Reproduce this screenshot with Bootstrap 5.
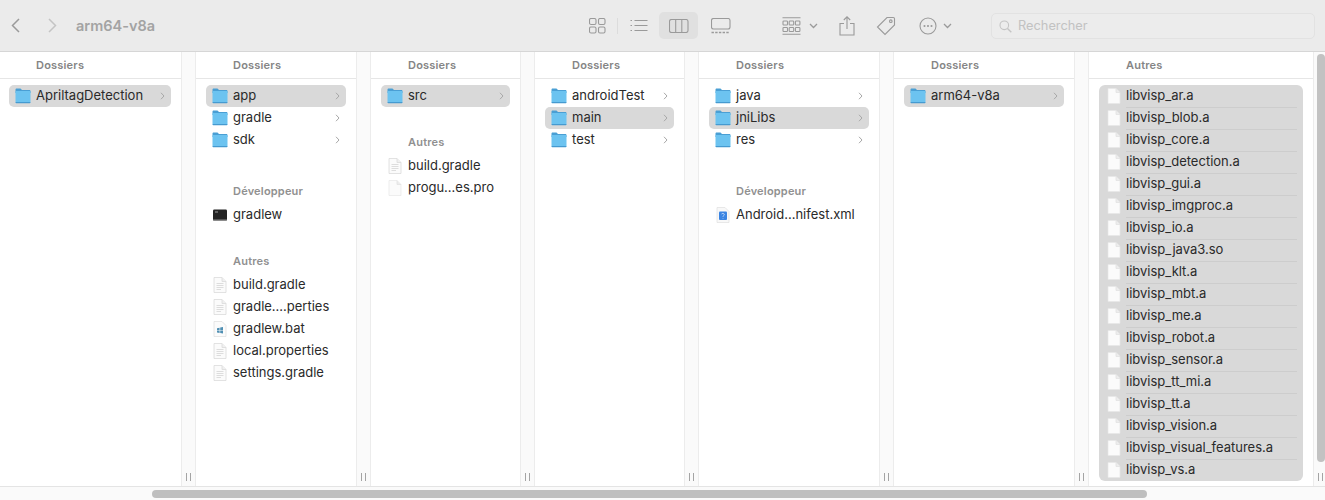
<!DOCTYPE html>
<html lang="fr">
<head>
<meta charset="utf-8">
<title>arm64-v8a</title>
<link rel="stylesheet" href="https://cdn.jsdelivr.net/npm/bootstrap@5.3.0/dist/css/bootstrap.min.css">
<style>
html,body{height:500px;overflow:hidden;background:#fff}
body{font-family:Inter,"Liberation Sans",sans-serif;font-size:13px;color:#2a2a2a}
.win{width:1325px;height:500px}
.tb{height:52px;background:#ebebeb;border-bottom:1px solid #d6d6d6;flex:none}
.tb svg{display:block;flex:none;fill:none;stroke:#9a9a9a;stroke-width:1.1}
.tb svg.dim{stroke:#c4c4c4}
.ttl{font-size:14.5px;font-weight:600;color:#a3a3a3;width:80px;margin-left:19px;white-space:nowrap}
.viewsel{width:39px;height:27px;background:#e0e0e0;border-radius:5px}
.tsep{width:1px;height:16px;background:#dcdcdc}
.srch{width:324px;height:26px;margin-left:39px;margin-top:1px;border:1px solid #e2e2e2;border-radius:5px;background:#ececec;color:#c2c2c2;font-size:12.8px;padding-left:7px;gap:6px}
.cols{height:434px;flex:none}
.colm{flex:none;height:100%}
.w1{width:181px}.w2{width:160px}.w3{width:149px}.w5{width:180px}.w6{width:180px}.w7{width:224px}
.gut{flex:none;width:15px;background:#fafafa;border-left:1px solid #ececec;border-right:1px solid #ececec;padding-bottom:5px}
.gut-last{width:12px;border-right:0;padding-bottom:5px}
.grip{width:5px;height:8px;border-left:1px solid #a4a4a4;border-right:1px solid #a4a4a4}
.vthumb{width:8px;height:408px;background:#c2c2c2;border-radius:4px;margin:2px 0 0 3px}
.hd{height:27px;border-bottom:1px solid #e6e6e6;font-size:11px;font-weight:600;color:#858585;padding-left:37px;margin-bottom:6px;letter-spacing:.2px;line-height:26px}
.w1 .hd{padding-left:36px}
.sec{font-size:11px;font-weight:600;color:#909090;padding-left:37px;height:18px;line-height:18px;margin-top:26px;margin-bottom:4px;letter-spacing:.2px}
.sec.far{margin-top:31px}
.rw{height:22px;margin:0 10px;padding:0 6px 0 5px;border-radius:5px;gap:4px;white-space:nowrap}
.w1 .rw{margin-left:9px}
.rw.on{background:#d9d9d9}
.rw svg{flex:none}
.nm{flex:1}
.cv{flex:none;width:5px;height:8px;stroke:#a8a8a8;fill:none;stroke-width:1}
.ico{width:18px;height:18px}
.blk{margin:0 10px;background:#d9d9d9;border-radius:6px;padding:0 6px 0 0;width:204px}
.blk .rw2{height:22px;padding-left:6px;gap:3px;position:relative;white-space:nowrap}
.blk .rw2 + .rw2::before{content:"";position:absolute;left:27px;right:0;top:0;border-top:1px solid #cdcdcd}
.hbar{height:14px;flex:none;background:#fafafa;border-top:1px solid #e4e4e4;padding-left:152px;padding-top:3px}
.hthumb{width:995px;height:8px;border-radius:4px;background:#bfbfbf}
</style>
</head>
<body>
<svg width="0" height="0" class="d-block position-absolute">
<defs>
<symbol id="fld" viewBox="0 0 18 18">
<path d="M1.500 4V2.600C1.500 2 2 1.500 2.600 1.500H6.500L8 3H15.400C16 3 16.500 3.500 16.500 4.100V6H1.500Z" fill="#4a9fd4"/>
<path d="M1.500 5.200C1.500 4.500 2 4 2.700 4H15.300C16 4 16.500 4.500 16.500 5.200V14.800C16.500 15.500 16 16 15.300 16H2.700C2 16 1.500 15.500 1.500 14.800Z" fill="#6cc3f0"/>
<path d="M1.500 15H16.500V15.200C16.500 15.700 16 16.200 15.400 16.200H2.600C2 16.200 1.500 15.700 1.500 15.200Z" fill="#459ad0"/>
</symbol>
<symbol id="doc" viewBox="0 0 18 18">
<path d="M3 1.500H11L15 5.500V16.500H3Z" fill="#fbfbfb" stroke="#dadada" stroke-width=".8"/>
<path d="M11 1.500V5.500H15" fill="#f0f0f0" stroke="#dadada" stroke-width=".8"/>
<path d="M5.500 7.500H12.500M5.500 9.500H12.500M5.500 11.500H12.500M5.500 13.500H10" stroke="#d6d6d6" stroke-width=".8"/>
</symbol>
<symbol id="blank" viewBox="0 0 18 18">
<path d="M3 1.500H11L15 5.500V16.500H3Z" fill="#fbfbfb" stroke="#e6e6e6" stroke-width=".7"/>
<path d="M11 1.500V5.500H15" fill="#ededed" stroke="#dfdfdf" stroke-width=".7"/>
</symbol>
<symbol id="term" viewBox="0 0 18 18">
<rect x="2" y="3.500" width="14" height="11" rx="1.200" fill="#232323"/>
<rect x="2" y="13.500" width="14" height="1.200" fill="#8a8a8a"/>
<path d="M4 6H7" stroke="#bdbdbd" stroke-width=".8"/>
</symbol>
<symbol id="bat" viewBox="0 0 18 18">
<path d="M3 1.500H11L15 5.500V16.500H3Z" fill="#fbfbfb" stroke="#dcdcdc" stroke-width=".7"/>
<path d="M6 8.200L8.600 7.700V10H6ZM9.200 7.600L12 7V10H9.200ZM6 10.600H8.600V12.900L6 12.400ZM9.200 10.600H12V13.600L9.200 13Z" fill="#4f8fb3"/>
</symbol>
<symbol id="xml" viewBox="0 0 18 18">
<path d="M3 1.500H11L15 5.500V16.500H3Z" fill="#f8f8f8" stroke="#e0e0e0" stroke-width=".7"/>
<rect x="5" y="5.500" width="8" height="8.500" rx="1" fill="#3a84e2"/>
<path d="M7.500 8C7.800 7.200 10.300 7.200 10.300 8.500C10.300 9.500 9 9.500 9 10.800M9 12V12.600" stroke="#cfe2fb" stroke-width=".8" fill="none"/>
</symbol>
<symbol id="chev" viewBox="0 0 5 8"><path d="M1 .8L4 4L1 7.200"/></symbol>
</defs>
</svg>

<div class="win d-flex flex-column">
  <div class="tb d-flex align-items-center">
    <svg style="margin-left:11px;stroke-width:1.500" width="9" height="15" viewBox="0 0 9 15"><path d="M8 1L1.500 7.500L8 14"/></svg>
    <svg class="dim" style="margin-left:28px;stroke-width:1.500" width="9" height="15" viewBox="0 0 9 15"><path d="M1 1L7.500 7.500L1 14"/></svg>
    <div class="ttl">arm64-v8a</div>
    <svg style="margin-left:433px" width="17" height="16" viewBox="0 0 17 16"><rect x=".5" y=".5" width="6.500" height="6" rx="1.500"/><rect x="9.500" y=".5" width="6.500" height="6" rx="1.500"/><rect x=".5" y="9" width="6.500" height="6" rx="1.500"/><rect x="9.500" y="9" width="6.500" height="6" rx="1.500"/></svg>
    <div class="tsep" style="margin-left:11px"></div>
    <svg style="margin-left:12px" width="18" height="13" viewBox="0 0 18 13"><path d="M4.500 1.500H17.500M4.500 6.500H17.500M4.500 11.500H17.500M.5 1.500H2M.5 6.500H2M.5 11.500H2"/></svg>
    <div class="viewsel d-flex align-items-center justify-content-center" style="margin-left:11px">
      <svg width="20" height="14" viewBox="0 0 20 14"><rect x=".5" y=".5" width="18.500" height="13" rx="2"/><path d="M6.700 .5V13.500M12.800 .5V13.500"/></svg>
    </div>
    <svg style="margin-left:13px" width="20" height="16" viewBox="0 0 20 16"><rect x=".5" y=".5" width="18.500" height="10.500" rx="2"/><path d="M.5 14.500H19" stroke-dasharray="2.400 1.300" stroke-width="1.600"/></svg>
    <svg style="margin-left:51px" width="19" height="18" viewBox="0 0 19 18"><path d="M.5 .8H18.500M.5 17.300H18.500" /><rect x="1" y="4" width="4.500" height="4" rx=".8"/><rect x="7.200" y="4" width="4.500" height="4" rx=".8"/><rect x="13.400" y="4" width="4.500" height="4" rx=".8"/><rect x="1" y="10.500" width="4.500" height="4" rx=".8"/><rect x="7.200" y="10.500" width="4.500" height="4" rx=".8"/><rect x="13.400" y="10.500" width="4.500" height="4" rx=".8"/></svg>
    <svg style="margin-left:8px;stroke-width:1.300" width="9" height="6" viewBox="0 0 9 6"><path d="M1 1L4.500 4.500L8 1"/></svg>
    <svg style="margin-left:21px" width="16" height="20" viewBox="0 0 16 20"><path d="M5 7.500H1V19H15V7.500H11M8 13V1M4.800 4L8 .8L11.200 4"/></svg>
    <svg style="margin-left:21px" width="20" height="20" viewBox="0 0 20 20"><path d="M11 1.500H17.300C18 1.500 18.500 2 18.500 2.700V9L9 18.500L1.500 11Z"/><circle cx="14.800" cy="5.200" r="1.300"/></svg>
    <svg style="margin-left:23px" width="18" height="18" viewBox="0 0 18 18"><circle cx="9" cy="9" r="8"/><circle cx="5.500" cy="9" r=".5"/><circle cx="9" cy="9" r=".5"/><circle cx="12.500" cy="9" r=".5"/></svg>
    <svg style="margin-left:6px;stroke-width:1.300" width="9" height="6" viewBox="0 0 9 6"><path d="M1 1L4.500 4.500L8 1"/></svg>
    <div class="srch d-flex align-items-center">
      <svg class="dim" width="13" height="13" viewBox="0 0 13 13"><circle cx="5.300" cy="5.300" r="4.300"/><path d="M8.500 8.500L12.300 12.300" stroke-width="1.400"/></svg>
      <span>Rechercher</span>
    </div>
  </div>

  <div class="cols d-flex">
    <div class="colm w1">
      <div class="hd">Dossiers</div>
      <div class="rw on d-flex align-items-center"><svg class="ico"><use href="#fld"/></svg><span class="nm">ApriltagDetection</span><svg class="cv"><use href="#chev"/></svg></div>
    </div>
    <div class="gut d-flex justify-content-center align-items-end"><div class="grip"></div></div>

    <div class="colm w2">
      <div class="hd">Dossiers</div>
      <div class="rw on d-flex align-items-center"><svg class="ico"><use href="#fld"/></svg><span class="nm">app</span><svg class="cv"><use href="#chev"/></svg></div>
      <div class="rw d-flex align-items-center"><svg class="ico"><use href="#fld"/></svg><span class="nm">gradle</span><svg class="cv"><use href="#chev"/></svg></div>
      <div class="rw d-flex align-items-center"><svg class="ico"><use href="#fld"/></svg><span class="nm">sdk</span><svg class="cv"><use href="#chev"/></svg></div>
      <div class="sec far">Développeur</div>
      <div class="rw d-flex align-items-center"><svg class="ico"><use href="#term"/></svg><span class="nm">gradlew</span></div>
      <div class="sec">Autres</div>
      <div class="rw d-flex align-items-center"><svg class="ico"><use href="#doc"/></svg><span class="nm">build.gradle</span></div>
      <div class="rw d-flex align-items-center"><svg class="ico"><use href="#doc"/></svg><span class="nm">gradle....perties</span></div>
      <div class="rw d-flex align-items-center"><svg class="ico"><use href="#bat"/></svg><span class="nm">gradlew.bat</span></div>
      <div class="rw d-flex align-items-center"><svg class="ico"><use href="#doc"/></svg><span class="nm">local.properties</span></div>
      <div class="rw d-flex align-items-center"><svg class="ico"><use href="#doc"/></svg><span class="nm">settings.gradle</span></div>
    </div>
    <div class="gut d-flex justify-content-center align-items-end"><div class="grip"></div></div>

    <div class="colm w3">
      <div class="hd">Dossiers</div>
      <div class="rw on d-flex align-items-center"><svg class="ico"><use href="#fld"/></svg><span class="nm">src</span><svg class="cv"><use href="#chev"/></svg></div>
      <div class="sec">Autres</div>
      <div class="rw d-flex align-items-center"><svg class="ico"><use href="#doc"/></svg><span class="nm">build.gradle</span></div>
      <div class="rw d-flex align-items-center"><svg class="ico"><use href="#blank"/></svg><span class="nm">progu...es.pro</span></div>
    </div>
    <div class="gut d-flex justify-content-center align-items-end"><div class="grip"></div></div>

    <div class="colm w3">
      <div class="hd">Dossiers</div>
      <div class="rw d-flex align-items-center"><svg class="ico"><use href="#fld"/></svg><span class="nm">androidTest</span><svg class="cv"><use href="#chev"/></svg></div>
      <div class="rw on d-flex align-items-center"><svg class="ico"><use href="#fld"/></svg><span class="nm">main</span><svg class="cv"><use href="#chev"/></svg></div>
      <div class="rw d-flex align-items-center"><svg class="ico"><use href="#fld"/></svg><span class="nm">test</span><svg class="cv"><use href="#chev"/></svg></div>
    </div>
    <div class="gut d-flex justify-content-center align-items-end"><div class="grip"></div></div>

    <div class="colm w5">
      <div class="hd">Dossiers</div>
      <div class="rw d-flex align-items-center"><svg class="ico"><use href="#fld"/></svg><span class="nm">java</span><svg class="cv"><use href="#chev"/></svg></div>
      <div class="rw on d-flex align-items-center"><svg class="ico"><use href="#fld"/></svg><span class="nm">jniLibs</span><svg class="cv"><use href="#chev"/></svg></div>
      <div class="rw d-flex align-items-center"><svg class="ico"><use href="#fld"/></svg><span class="nm">res</span><svg class="cv"><use href="#chev"/></svg></div>
      <div class="sec far">Développeur</div>
      <div class="rw d-flex align-items-center"><svg class="ico"><use href="#xml"/></svg><span class="nm">Android...nifest.xml</span></div>
    </div>
    <div class="gut d-flex justify-content-center align-items-end"><div class="grip"></div></div>

    <div class="colm w6">
      <div class="hd">Dossiers</div>
      <div class="rw on d-flex align-items-center"><svg class="ico"><use href="#fld"/></svg><span class="nm">arm64-v8a</span><svg class="cv"><use href="#chev"/></svg></div>
    </div>
    <div class="gut d-flex justify-content-center align-items-end"><div class="grip"></div></div>

    <div class="colm w7">
      <div class="hd">Autres</div>
      <div class="blk">
        <div class="rw2 d-flex align-items-center"><svg class="ico"><use href="#blank"/></svg><span>libvisp_ar.a</span></div>
        <div class="rw2 d-flex align-items-center"><svg class="ico"><use href="#blank"/></svg><span>libvisp_blob.a</span></div>
        <div class="rw2 d-flex align-items-center"><svg class="ico"><use href="#blank"/></svg><span>libvisp_core.a</span></div>
        <div class="rw2 d-flex align-items-center"><svg class="ico"><use href="#blank"/></svg><span>libvisp_detection.a</span></div>
        <div class="rw2 d-flex align-items-center"><svg class="ico"><use href="#blank"/></svg><span>libvisp_gui.a</span></div>
        <div class="rw2 d-flex align-items-center"><svg class="ico"><use href="#blank"/></svg><span>libvisp_imgproc.a</span></div>
        <div class="rw2 d-flex align-items-center"><svg class="ico"><use href="#blank"/></svg><span>libvisp_io.a</span></div>
        <div class="rw2 d-flex align-items-center"><svg class="ico"><use href="#blank"/></svg><span>libvisp_java3.so</span></div>
        <div class="rw2 d-flex align-items-center"><svg class="ico"><use href="#blank"/></svg><span>libvisp_klt.a</span></div>
        <div class="rw2 d-flex align-items-center"><svg class="ico"><use href="#blank"/></svg><span>libvisp_mbt.a</span></div>
        <div class="rw2 d-flex align-items-center"><svg class="ico"><use href="#blank"/></svg><span>libvisp_me.a</span></div>
        <div class="rw2 d-flex align-items-center"><svg class="ico"><use href="#blank"/></svg><span>libvisp_robot.a</span></div>
        <div class="rw2 d-flex align-items-center"><svg class="ico"><use href="#blank"/></svg><span>libvisp_sensor.a</span></div>
        <div class="rw2 d-flex align-items-center"><svg class="ico"><use href="#blank"/></svg><span>libvisp_tt_mi.a</span></div>
        <div class="rw2 d-flex align-items-center"><svg class="ico"><use href="#blank"/></svg><span>libvisp_tt.a</span></div>
        <div class="rw2 d-flex align-items-center"><svg class="ico"><use href="#blank"/></svg><span>libvisp_vision.a</span></div>
        <div class="rw2 d-flex align-items-center"><svg class="ico"><use href="#blank"/></svg><span>libvisp_visual_features.a</span></div>
        <div class="rw2 d-flex align-items-center"><svg class="ico"><use href="#blank"/></svg><span>libvisp_vs.a</span></div>
      </div>
    </div>
    <div class="gut gut-last d-flex flex-column justify-content-between">
      <div class="vthumb"></div>
      <div class="grip ms-1"></div>
    </div>
  </div>

  <div class="hbar"><div class="hthumb"></div></div>
</div>
</body>
</html>
